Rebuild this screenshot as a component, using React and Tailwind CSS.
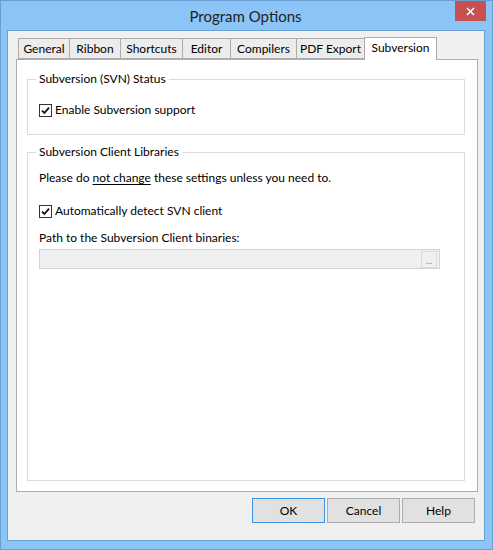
import { useState } from 'react';

const tabs = [
  { name: 'General', w: 'w-[52px]' },
  { name: 'Ribbon', w: 'w-[52px]' },
  { name: 'Shortcuts', w: 'w-[63px]' },
  { name: 'Editor', w: 'w-[49px]' },
  { name: 'Compilers', w: 'w-[67px]' },
  { name: 'PDF Export', w: 'w-[69px]' },
  { name: 'Subversion', w: 'w-[73px]' },
];

function CheckBox({ checked }) {
  return (
    <span className="flex h-[13px] w-[13px] shrink-0 items-center justify-center border border-[#333] bg-white">
      {checked && (
        <svg width="9" height="9" viewBox="0 0 9 9">
          <path d="M1 4.6 L3.4 7 L8 1.6" fill="none" stroke="#111" strokeWidth="1.8" />
        </svg>
      )}
    </span>
  );
}

function CheckRow({ label, checked, onToggle, className }) {
  return (
    <label onClick={onToggle} className={`flex h-[16px] items-center gap-[3px] ${className}`}>
      <CheckBox checked={checked} />
      <span>{label}</span>
    </label>
  );
}

export default function App() {
  const [active, setActive] = useState('Subversion');
  const [svn, setSvn] = useState(true);
  const [auto, setAuto] = useState(true);

  return (
    <div
      className="flex h-[550px] w-[493px] flex-col border border-[#6a9fd3] bg-[#8bc4f6] text-[12px] text-black"
      style={{ fontFamily: 'Lato, "Noto Sans", sans-serif' }}
    >
      {/* Title bar */}
      <div className="grid h-[29px] grid-cols-[1fr_auto_1fr] pr-[6px]">
        <div />
        <div className="self-center pl-[4px] pt-[1px] text-[15px] text-[#222]">Program Options</div>
        <div className="flex justify-end">
          <div className="flex h-[20px] w-[31px] items-center justify-center bg-[#c75050]">
            <svg width="9" height="9" viewBox="0 0 9 9">
              <path d="M1 1 L8 8 M8 1 L1 8" stroke="#fff" strokeWidth="1.6" />
            </svg>
          </div>
        </div>
      </div>

      {/* Client area */}
      <div className="mb-[8px] ml-[6px] mr-[7px] flex flex-1 flex-col border border-[#6a9fd3] bg-[#f0f0f0]">
        <div className="ml-[8px] mr-[6px] mt-[6px] flex flex-col">
          {/* Tabs */}
          <div className="flex h-[22px] items-end pl-[2px]">
            {tabs.map((t, i) => {
              const sel = t.name === active;
              return (
                <button
                  key={t.name}
                  onClick={() => setActive(t.name)}
                  className={
                    sel
                      ? `relative z-10 -mb-px -ml-px flex h-[23px] ${t.w} items-start justify-center border border-b-0 border-[#acacac] bg-white pt-[1px]`
                      : `flex h-[21px] ${t.w} items-center justify-center border border-[#acacac] bg-[#ececec] ${i > 0 ? '-ml-px' : ''}`
                  }
                >
                  {t.name}
                </button>
              );
            })}
          </div>

          {/* Panel */}
          <div className="flex h-[433px] flex-col border border-[#acacac] bg-white">
            <fieldset className="ml-[10px] mr-[12px] mt-[11px] h-[64px] border border-[#dcdcdc] pl-[11px]">
              <legend className="-ml-[3px] px-[3px] leading-[16px]">Subversion (SVN) Status</legend>
              <CheckRow
                label="Enable Subversion support"
                checked={svn}
                onToggle={() => setSvn(!svn)}
                className="mt-[15px]"
              />
            </fieldset>

            <fieldset className="ml-[10px] mr-[12px] mt-[9px] h-[337px] border border-[#dcdcdc] pl-[11px]">
              <legend className="-ml-[3px] px-[3px] leading-[16px]">Subversion Client Libraries</legend>
              <p className="mt-[10px] leading-[16px]">
                Please do <span className="underline underline-offset-2">not change</span> these settings unless you need to.
              </p>
              <CheckRow
                label="Automatically detect SVN client"
                checked={auto}
                onToggle={() => setAuto(!auto)}
                className="mt-[17px]"
              />
              <p className="mt-[11px] leading-[16px]">Path to the Subversion Client binaries:</p>
              <div className="mt-[3px] flex h-[20px] w-[401px] items-center justify-end border border-[#d4d4d4] bg-[#f0f0f0] pr-[2px]">
                <div className="flex h-[17px] w-[16px] items-end justify-center border border-[#dadada] pb-[3px] text-[9px] leading-[6px] text-[#888]">
                  ...
                </div>
              </div>
            </fieldset>
          </div>

          {/* Buttons */}
          <div className="mr-[3px] mt-[6px] flex justify-end gap-[2px]">
            <button className="h-[25px] w-[73px] border border-[#3c93e0] bg-[#e1e1e1]">OK</button>
            <button className="h-[25px] w-[73px] border border-[#adadad] bg-[#e1e1e1]">Cancel</button>
            <button className="h-[25px] w-[73px] border border-[#adadad] bg-[#e1e1e1]">Help</button>
          </div>
        </div>
      </div>
    </div>
  );
}
